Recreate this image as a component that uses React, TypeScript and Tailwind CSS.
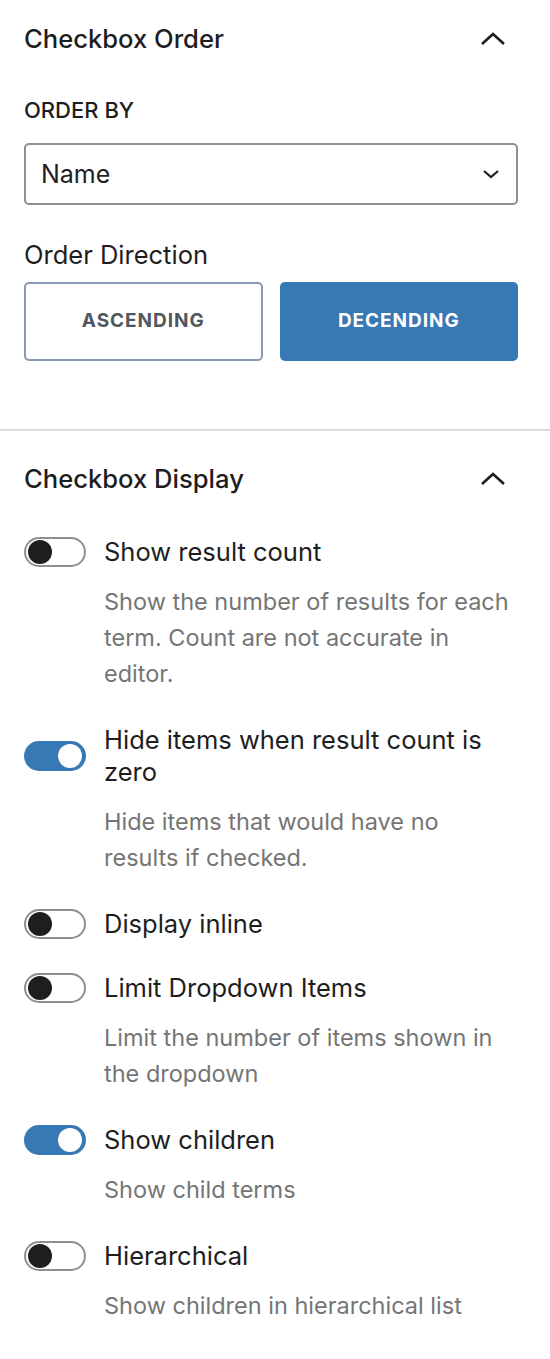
import React from "react";

type Item = {
    label: string;
    help?: string;
    on: boolean;
};

const items: Item[] = [
    { label: "Show result count", help: "Show the number of results for each term. Count are not accurate in editor.", on: false },
    { label: "Hide items when result count is zero", help: "Hide items that would have no results if checked.", on: true },
    { label: "Display inline", on: false },
    { label: "Limit Dropdown Items", help: "Limit the number of items shown in the dropdown", on: false },
    { label: "Show children", help: "Show child terms", on: true },
    { label: "Hierarchical", help: "Show children in hierarchical list", on: false },
];

const ChevronUp = () => (
    <svg width="26" height="16" viewBox="0 0 26 16" fill="none">
        <path d="M2 13 L13 3 L24 13" stroke="#1e1e1e" strokeWidth="2.6" />
    </svg>
);

const ChevronDown = () => (
    <svg width="18" height="12" viewBox="0 0 18 12" fill="none">
        <path d="M2 3 L9 9 L16 3" stroke="#1e1e1e" strokeWidth="2.2" />
    </svg>
);

const Toggle = ({ on }: { on: boolean }) => (
    <div
        className={
            on
                ? "flex h-[30px] w-[62px] shrink-0 items-center justify-end rounded-full bg-[#3779b5] px-[4px]"
                : "flex h-[30px] w-[62px] shrink-0 items-center justify-start rounded-full border-2 border-[#8f8f8f] bg-white px-[2px]"
        }
    >
        <div className={on ? "h-[24px] w-[24px] rounded-full bg-white" : "h-[24px] w-[24px] rounded-full bg-[#1e1e1e]"} />
    </div>
);

const PanelTitle = ({ title }: { title: string }) => (
    <div className="flex items-center justify-between pr-[12px]">
        <h2 className="text-[25.6px] font-medium leading-[32px] text-[#1e1e1e]">{title}</h2>
        <ChevronUp />
    </div>
);

export default function App() {
    return (
        <div className="w-[550px] bg-white font-['Inter','Liberation_Sans',sans-serif] text-[#1e1e1e]">
            {/* Checkbox Order */}
            <section className="pl-6 pr-8 pt-[23px] pb-[68px]">
                <PanelTitle title="Checkbox Order" />

                <p className="mt-[40px] text-[22px] font-medium uppercase leading-[30px]">Order by</p>

                <div className="mt-[18px] flex h-[62px] items-center justify-between rounded-[5px] border-2 border-[#8c8f94] pl-[15px] pr-[16px]">
                    <span className="text-[25px] leading-[32px]">Name</span>
                    <ChevronDown />
                </div>

                <p className="mt-[33px] text-[25.5px] leading-[34px]">Order Direction</p>

                <div className="mt-[10px] grid grid-cols-2 gap-[17px]">
                    <button className="h-[79px] rounded-[5px] border-2 border-[#8898b0] bg-white text-[19px] font-bold tracking-[0.05em] text-[#50575e]">
                        ASCENDING
                    </button>
                    <button className="h-[79px] rounded-[5px] bg-[#3779b5] text-[19px] font-bold tracking-[0.05em] text-white">
                        DECENDING
                    </button>
                </div>
            </section>

            <div className="h-[2px] bg-[#dcdcde]" />

            {/* Checkbox Display */}
            <section className="pl-6 pr-8 pt-[32px] pb-[40px]">
                <PanelTitle title="Checkbox Display" />

                <div className="mt-[41px] flex flex-col gap-8">
                    {items.map((item) => (
                        <div key={item.label}>
                            <div className="flex items-center gap-[18px]">
                                <Toggle on={item.on} />
                                <span className="text-[25.5px] leading-[32px]">{item.label}</span>
                            </div>
                            {item.help && (
                                <p className="mt-4 pl-[80px] text-[23.5px] leading-[36px] text-[#757575]">{item.help}</p>
                            )}
                        </div>
                    ))}
                </div>
            </section>
        </div>
    );
}
